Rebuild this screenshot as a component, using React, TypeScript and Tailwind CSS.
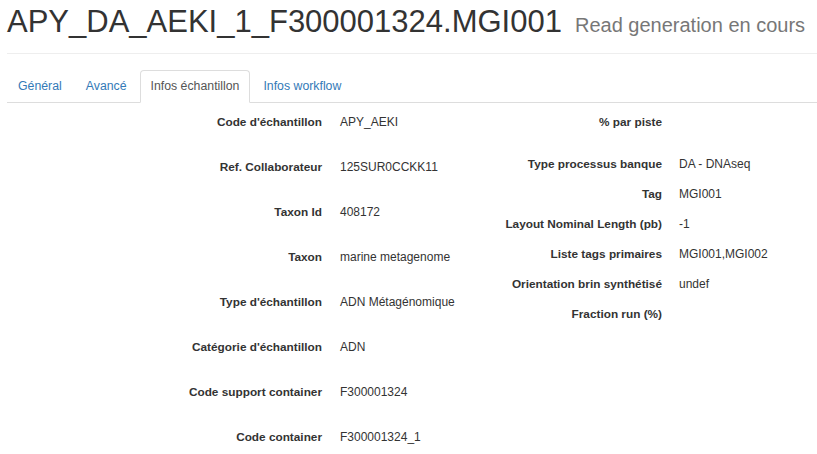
import React from "react";

const left: [string, string][] = [
  ["Code d'échantillon", "APY_AEKI"],
  ["Ref. Collaborateur", "125SUR0CCKK11"],
  ["Taxon Id", "408172"],
  ["Taxon", "marine metagenome"],
  ["Type d'échantillon", "ADN Métagénomique"],
  ["Catégorie d'échantillon", "ADN"],
  ["Code support container", "F300001324"],
  ["Code container", "F300001324_1"],
];

const right: [string, string, string][] = [
  ["% par piste", "", "h-[42px]"],
  ["Type processus banque", "DA - DNAseq", "h-[30px]"],
  ["Tag", "MGI001", "h-[30px]"],
  ["Layout Nominal Length (pb)", "-1", "h-[30px]"],
  ["Liste tags primaires", "MGI001,MGI002", "h-[30px]"],
  ["Orientation brin synthétisé", "undef", "h-[30px]"],
  ["Fraction run (%)", "", "h-[30px]"],
];

const tabs = ["Général", "Avancé", "Infos échantillon", "Infos workflow"];

const App = () => {
  return (
    <div className="h-[454px] w-[817px] overflow-hidden bg-white pl-[7px] font-['Liberation_Sans',Arial,sans-serif] text-[#333]">
      <div className="flex items-baseline gap-[13px] border-b border-[#eee] pt-[2px] pb-[11px]">
        <h1 className="text-[31px] leading-[40px] font-normal whitespace-nowrap">APY_DA_AEKI_1_F300001324.MGI001</h1>
        <small className="text-[20px] text-[#777] whitespace-nowrap">Read generation en cours</small>
      </div>

      <ul className="mt-[16px] flex gap-[2px] border-b border-[#ddd] text-[12.3px] leading-[20px]">
        {tabs.map((t, i) =>
          i === 2 ? (
            <li
              key={t}
              className="-mb-px rounded-t border border-[#ddd] border-b-white bg-white px-[10px] py-[5px] text-[#555]"
            >
              {t}
            </li>
          ) : (
            <li key={t} className="border border-transparent px-[10px] py-[5px] text-[#337ab7]">
              {t}
            </li>
          )
        )}
      </ul>

      <div className="flex pt-[11px] text-[12px] leading-[17px]">
        <dl className="w-[405px] shrink-0">
          {left.map(([k, v]) => (
            <div key={k} className="flex h-[45px]">
              <dt className="w-[315px] shrink-0 text-right text-[11.8px] font-bold">{k}</dt>
              <dd className="ml-[18px] whitespace-nowrap">{v}</dd>
            </div>
          ))}
        </dl>
        <dl className="flex-1">
          {right.map(([k, v, h]) => (
            <div key={k} className={`flex ${h}`}>
              <dt className="w-[250px] shrink-0 text-right text-[11.8px] font-bold">{k}</dt>
              <dd className="ml-[17px] whitespace-nowrap">{v}</dd>
            </div>
          ))}
        </dl>
      </div>
    </div>
  );
};

export default App;
